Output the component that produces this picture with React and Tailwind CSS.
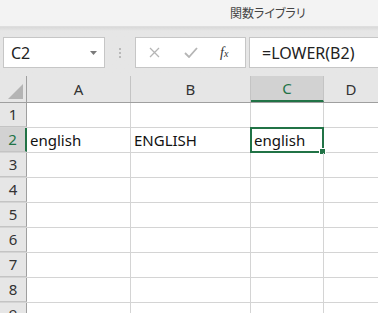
const font = "font-['Noto_Sans','Noto_Sans_CJK_JP',sans-serif]"

const rows = [1, 2, 3, 4, 5, 6, 7, 8, 9]

function Cell({ w, children, className = '' }) {
  return (
    <div className={`${w} h-full shrink-0 border-r border-[#d4d4d4] flex items-center pl-[3px] text-[15px] text-[#111] ${className}`}>
      {children}
    </div>
  )
}

export default function App() {
  return (
    <div className={`w-[378px] h-[313px] overflow-hidden bg-white ${font}`}>
      {/* ribbon group label */}
      <div className="h-[27px] bg-[#f3f3f3] flex items-center pl-[230px] border-b border-[#dedede]">
        <span className="text-[12px] text-[#444] [font-feature-settings:'palt'] font-['Noto_Sans_CJK_JP',sans-serif]">関数ライブラリ</span>
      </div>

      {/* formula bar */}
      <div className="h-[49px] bg-[#e6e6e6] bg-gradient-to-b from-[#d9d9d9] via-[#e6e6e6] via-[8%] to-[#e6e6e6] flex items-start pt-[10px]">
        <div className="ml-[3px] w-[102px] h-[31px] bg-white border border-[#c6c6c6] flex items-center justify-between pl-[7px] pr-[7px]">
          <span className="text-[16px] text-[#222]">C2</span>
          <svg width="7" height="4" viewBox="0 0 7 4"><path d="M0 0h7L3.5 4z" fill="#7a7a7a" /></svg>
        </div>
        <div className="w-[30px] h-[31px] flex flex-col items-center justify-center gap-[2px]">
          <span className="w-[2px] h-[2px] bg-[#b9b9b9]" />
          <span className="w-[2px] h-[2px] bg-[#b9b9b9]" />
          <span className="w-[2px] h-[2px] bg-[#b9b9b9]" />
        </div>
        <div className="w-[111px] h-[31px] bg-white border border-[#c6c6c6] flex items-center pl-[12px]">
          <svg width="11" height="11" viewBox="0 0 11 11" className="ml-[1px]">
            <path d="M1 1l9 9M10 1l-9 9" stroke="#b5b5b5" strokeWidth="1.3" />
          </svg>
          <svg width="14" height="11" viewBox="0 0 14 11" className="ml-[24px]">
            <path d="M1 6l4 4 8-9" stroke="#b5b5b5" strokeWidth="1.8" fill="none" />
          </svg>
          <span className="ml-[22px] text-[14px] italic text-[#333] font-['Liberation_Serif',serif] leading-none">
            f<span className="text-[10px]">x</span>
          </span>
        </div>
        <div className="ml-[3px] flex-1 h-[31px] bg-white border border-[#c6c6c6] border-r-0 flex items-center pl-[12px]">
          <span className="text-[16px] text-[#222]">=LOWER(B2)</span>
        </div>
      </div>

      {/* column headers */}
      <div className="h-[27px] flex bg-[#e6e6e6] border-b border-[#9f9f9f]">
        <div className="w-[27px] h-full shrink-0 border-r border-[#9f9f9f] flex items-end justify-end pr-[3px] pb-[3px]">
          <svg width="15" height="15" viewBox="0 0 15 15"><path d="M15 0V15H0z" fill="#b4b4b4" /></svg>
        </div>
        <div className="w-[104px] h-full shrink-0 border-r border-[#c4c4c4] flex items-center justify-center text-[15px] text-[#333]">A</div>
        <div className="w-[120px] h-full shrink-0 border-r border-[#c4c4c4] flex items-center justify-center text-[15px] text-[#333]">B</div>
        <div className="w-[73px] h-full shrink-0 border-r border-[#c4c4c4] bg-[#d2d2d2] border-b-2 border-b-[#217346] -mb-px flex items-center justify-center text-[15px] text-[#217346]">C</div>
        <div className="flex-1 h-full flex items-center justify-center text-[15px] text-[#333]">D</div>
      </div>

      {/* rows */}
      {rows.map((r) => (
        <div key={r} className="h-[25px] flex border-b border-[#d4d4d4]">
          <div
            className={`w-[27px] h-full shrink-0 flex items-center justify-center text-[15px] -mb-px border-b border-[#c4c4c4] ${
              r === 2
                ? 'bg-[#d2d2d2] text-[#217346] border-r-2 border-r-[#217346]'
                : 'bg-[#e6e6e6] text-[#333] border-r border-r-[#9f9f9f]'
            }`}
          >
            {r}
          </div>
          <Cell w="w-[104px]">{r === 2 ? 'english' : ''}</Cell>
          <Cell w="w-[120px]">{r === 2 ? 'ENGLISH' : ''}</Cell>
          <Cell w="w-[73px]" className="relative">
            {r === 2 && (
              <>
                english
                <div className="absolute -left-px -top-px -right-px -bottom-px border-2 border-[#217346]" />
                <div className="absolute -right-[3px] -bottom-[3px] w-[5px] h-[5px] bg-[#217346] border border-white box-content" />
              </>
            )}
          </Cell>
          <div className="flex-1 h-full" />
        </div>
      ))}
    </div>
  )
}
